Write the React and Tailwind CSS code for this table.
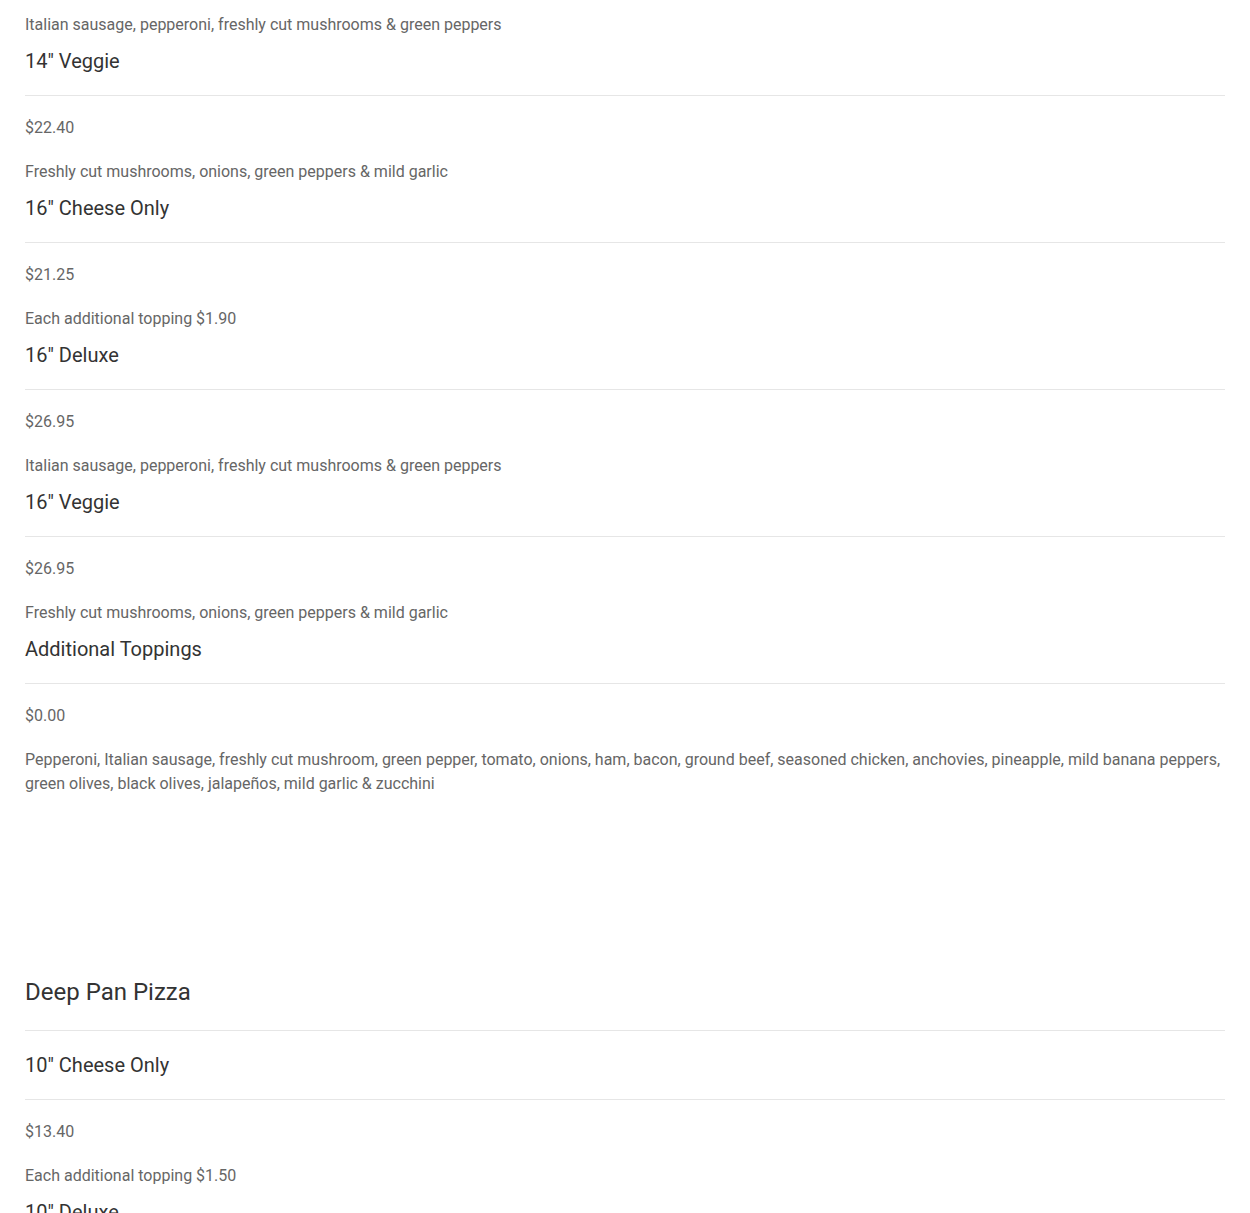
const items = [
  {
    title: '14" Veggie',
    price: "$22.40",
    desc: "Freshly cut mushrooms, onions, green peppers & mild garlic",
  },
  {
    title: '16" Cheese Only',
    price: "$21.25",
    desc: "Each additional topping $1.90",
  },
  {
    title: '16" Deluxe',
    price: "$26.95",
    desc: "Italian sausage, pepperoni, freshly cut mushrooms & green peppers",
  },
  {
    title: '16" Veggie',
    price: "$26.95",
    desc: "Freshly cut mushrooms, onions, green peppers & mild garlic",
  },
  {
    title: "Additional Toppings",
    price: "$0.00",
    desc: "Pepperoni, Italian sausage, freshly cut mushroom, green pepper, tomato, onions, ham, bacon, ground beef, seasoned chicken, anchovies, pineapple, mild banana peppers, green olives, black olives, jalapeños, mild garlic & zucchini",
  },
];

const deepPan = [
  {
    title: '10" Cheese Only',
    price: "$13.40",
    desc: "Each additional topping $1.50",
  },
  {
    title: '10" Deluxe',
    price: "$16.95",
    desc: "Italian sausage, pepperoni, freshly cut mushrooms & green peppers",
  },
];

function MenuItem({ title, price, desc, first }) {
  return (
    <div className={first ? "" : "mt-[9px]"}>
      <h3 className="text-[20px] leading-[30px] font-normal text-[#333333] pb-[19px] border-b border-[#e6e6e6]">
        {title}
      </h3>
      <p className="mt-5 text-[16px] leading-6 text-[#666666]">{price}</p>
      <p className="mt-5 text-[16px] leading-6 text-[#666666]">{desc}</p>
    </div>
  );
}

export default function App() {
  return (
    <div
      className="w-[1250px] min-h-[1213px] bg-white px-[25px] pt-[13px] overflow-hidden"
      style={{ fontFamily: "Roboto, 'Liberation Sans', sans-serif" }}
    >
      <p className="text-[16px] leading-6 text-[#666666]">
        Italian sausage, pepperoni, freshly cut mushrooms & green peppers
      </p>
      {items.map((item) => (
        <MenuItem key={item.title} {...item} />
      ))}

      <section className="mt-[178px]">
        <h2 className="text-[24px] leading-[36px] font-normal text-[#333333] pb-[20px] border-b border-[#e6e6e6]">
          Deep Pan Pizza
        </h2>
        <div className="mt-[19px]">
          {deepPan.map((item, i) => (
            <MenuItem key={item.title} first={i === 0} {...item} />
          ))}
        </div>
      </section>
    </div>
  );
}
